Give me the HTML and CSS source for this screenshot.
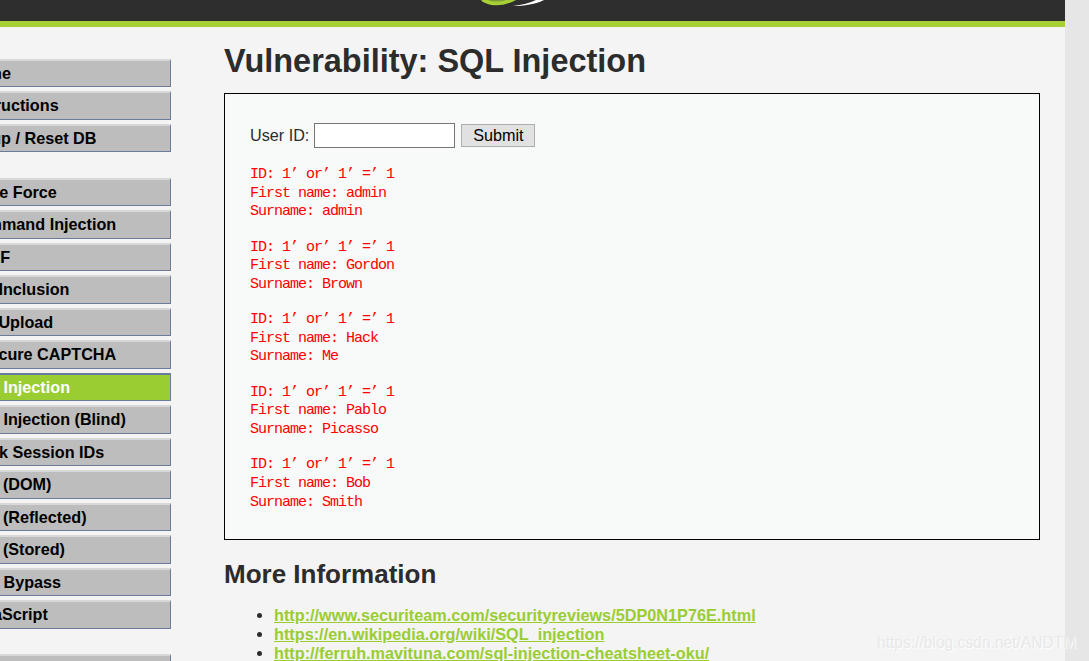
FILE: index.html
```html
<!DOCTYPE html>
<html lang="en">

<head>
  <meta charset="UTF-8">
  <meta name="viewport" content="width=device-width, initial-scale=1.0">
  <title>Vulnerability: SQL Injection</title>
  <link rel="stylesheet" href="styles.css">
</head>

<body>
  <div class="page">
    <div class="header">
      <svg class="logo" width="70" height="8" viewBox="0 0 70 8">
        <path d="M3 0 C8 6 24 8 38 0 Z" fill="#a6d034" />
        <path d="M10 0 C14 2 22 2 28 0 Z" fill="#7f9c3a" />
        <path d="M35 6 C46 6 58 4 66 0 L58 0 C52 3 44 5 35 6 Z" fill="#fff" />
      </svg>
    </div>

    <div class="columns">
      <div class="sidebar">
        <ul class="menu">
          <li><a href="#">Home</a></li>
          <li><a href="#">Instructions</a></li>
          <li><a href="#">Setup / Reset DB</a></li>
        </ul>
        <ul class="menu">
          <li><a href="#">Brute Force</a></li>
          <li><a href="#">Command Injection</a></li>
          <li><a href="#">CSRF</a></li>
          <li><a href="#">File Inclusion</a></li>
          <li><a href="#">File Upload</a></li>
          <li><a href="#">Insecure CAPTCHA</a></li>
          <li class="selected"><a href="#">SQL Injection</a></li>
          <li><a href="#">SQL Injection (Blind)</a></li>
          <li><a href="#">Weak Session IDs</a></li>
          <li><a href="#">XSS (DOM)</a></li>
          <li><a href="#">XSS (Reflected)</a></li>
          <li><a href="#">XSS (Stored)</a></li>
          <li><a href="#">CSP Bypass</a></li>
          <li><a href="#">JavaScript</a></li>
        </ul>
        <ul class="menu">
          <li><a href="#">DVWA Security</a></li>
        </ul>
      </div>

      <div class="main">
        <h1>Vulnerability: SQL Injection</h1>

        <div class="vulnerable-code">
          <form class="id-form">
            <label for="userId">User ID:</label>
            <input type="text" id="userId" name="id">
            <button type="button">Submit</button>
          </form>

          <pre class="result">ID: 1’ or’ 1’ =’ 1
First name: admin
Surname: admin</pre>
          <pre class="result">ID: 1’ or’ 1’ =’ 1
First name: Gordon
Surname: Brown</pre>
          <pre class="result">ID: 1’ or’ 1’ =’ 1
First name: Hack
Surname: Me</pre>
          <pre class="result">ID: 1’ or’ 1’ =’ 1
First name: Pablo
Surname: Picasso</pre>
          <pre class="result">ID: 1’ or’ 1’ =’ 1
First name: Bob
Surname: Smith</pre>
        </div>

        <h2>More Information</h2>
        <ul class="links">
          <li><a href="#">http://www.securiteam.com/securityreviews/5DP0N1P76E.html</a></li>
          <li><a href="#">https://en.wikipedia.org/wiki/SQL_injection</a></li>
          <li><a href="#">http://ferruh.mavituna.com/sql-injection-cheatsheet-oku/</a></li>
        </ul>
      </div>
    </div>
  </div>

  <div class="scrollbar"></div>

  <div class="watermark">https://blog.csdn.net/ANDTM</div>
</body>

</html>
```

FILE: styles.css
```css
html,
body {
  margin: 0;
  height: 661px;
  overflow: hidden;
}

body {
  display: flex;
  background-color: #f4f4f4;
  color: #2c2c2c;
  font-family: "Liberation Sans", Arial, sans-serif;
  font-size: 16.2px;
}

.page {
  flex: 1;
  min-width: 0;
}

.scrollbar {
  width: 24px;
  background-color: #e6e6e6;
}

.header {
  position: relative;
  height: 21px;
  background-color: #2e2e2e;
  border-bottom: 6px solid #a6d034;
}

.logo {
  position: absolute;
  left: 478px;
  top: 0;
}

.columns {
  display: flex;
}

.sidebar {
  flex: none;
  width: 232px;
  margin-left: -61px;
  padding-top: 31.75px;
}

.menu {
  list-style: none;
  margin: 0 0 25.25px;
  padding: 0;
}

.menu li {
  margin-bottom: 4px;
}

.menu a {
  display: block;
  box-sizing: border-box;
  height: 28.5px;
  padding-left: 27px;
  line-height: 25px;
  border-top: 2px solid #d8d8d8;
  border-right: 1px solid #6b7b9c;
  border-bottom: 1px solid #6b7b9c;
  background-color: #bdbdbd;
  color: #000;
  font-weight: bold;
  text-decoration: none;
}

.menu .selected a {
  border-top-color: #6b7b9c;
  background-color: #9acd32;
  color: #fff;
}

.main {
  flex: 1;
  min-width: 0;
  padding: 0 25px 0 53px;
}

h1 {
  margin: 16px 0 13px;
  font-size: 32.46px;
  line-height: 37px;
}

.vulnerable-code {
  box-sizing: border-box;
  height: 447px;
  padding: 28px 25px 0;
  border: 1px solid #000;
  background-color: #f8f9f9;
}

.id-form {
  display: flex;
  align-items: center;
  height: 26px;
  margin-bottom: 18px;
}

.id-form label {
  margin-right: 5px;
}

.id-form input {
  box-sizing: border-box;
  width: 141px;
  height: 25px;
  margin-right: 6px;
  padding: 1px 2px;
  border: 1px solid #767676;
  background-color: #fff;
}

.id-form button {
  box-sizing: border-box;
  width: 74px;
  height: 23px;
  padding: 0;
  border: 1px solid #adadad;
  background-color: #e1e1e1;
  color: #000;
  font-family: "Liberation Sans", Arial, sans-serif;
  font-size: 16.2px;
}

.result {
  margin: 0 0 16.8px;
  color: #f00;
  font-family: "Liberation Mono", "Courier New", monospace;
  font-size: 15px;
  letter-spacing: -1px;
  line-height: 18.6px;
}

h2 {
  margin: 18px 0 15px;
  font-size: 26px;
  line-height: 33px;
}

.links {
  margin: 0;
  padding-left: 50px;
  font-size: 16.26px;
  line-height: 18.9px;
}

.links a {
  color: #9acd32;
  font-weight: bold;
}

.watermark {
  position: absolute;
  left: 877px;
  top: 633px;
  color: #e8e8e8;
  font-size: 15.6px;
  line-height: 19px;
  text-shadow: 1px 1px 1px #fff;
}
```
